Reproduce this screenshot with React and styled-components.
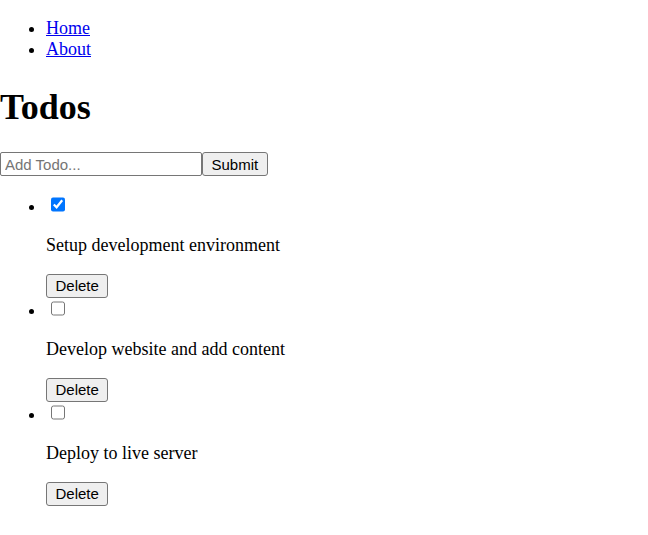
import React, { useState } from "react";
import styled, { createGlobalStyle } from "styled-components";

const Global = createGlobalStyle`
  body {
    margin: 0;
    font-family: "Liberation Serif", "Times New Roman", serif;
    font-size: 18px;
    color: #000;
    background: #fff;
  }
`;

const NavList = styled.ul`
  margin: 18px 0;
  padding-left: 46px;
  list-style: disc;
`;

const NavLink = styled.a`
  color: #0000ee;
  text-decoration: underline;
`;

const Title = styled.h1`
  font-size: 36px;
  font-weight: bold;
  margin: 26px 0 24px;
`;

const Form = styled.form`
  margin: 0;
`;

const TextInput = styled.input`
  box-sizing: border-box;
  width: 202px;
  height: 24px;
  margin: 0;
  padding: 1px 4px;
  border: 1px solid #767676;
  border-radius: 2px;
  font-family: "Liberation Sans", Arial, sans-serif;
  font-size: 15px;
  color: #000;
  vertical-align: baseline;
  &::placeholder {
    color: #757575;
  }
`;

const Button = styled.button`
  box-sizing: border-box;
  height: 24px;
  margin: 0;
  padding: 0 8.5px;
  border: 1px solid #767676;
  border-radius: 3px;
  background: #efefef;
  font-family: "Liberation Sans", Arial, sans-serif;
  font-size: 15px;
  color: #000;
`;

const TodoList = styled.ul`
  margin: 18px 0;
  padding-left: 46px;
  list-style: disc;
`;

const Check = styled.input`
  width: 14.5px;
  height: 14.5px;
  margin: 3.4px 3.4px 3.4px 4.5px;
  accent-color: #0075ff;
`;

const TodoText = styled.p`
  margin: 18px 0;
`;

const initial = [
  { id: 1, text: "Setup development environment", done: true },
  { id: 2, text: "Develop website and add content", done: false },
  { id: 3, text: "Deploy to live server", done: false },
];

export default function App() {
  const [todos, setTodos] = useState(initial);
  const [value, setValue] = useState("");

  const toggle = (id) =>
    setTodos((t) => t.map((x) => (x.id === id ? { ...x, done: !x.done } : x)));
  const remove = (id) => setTodos((t) => t.filter((x) => x.id !== id));
  const submit = (e) => {
    e.preventDefault();
    if (!value.trim()) return;
    setTodos((t) => [...t, { id: Date.now(), text: value, done: false }]);
    setValue("");
  };

  return (
    <>
      <Global />
      <nav>
        <NavList>
          <li>
            <NavLink href="#/">Home</NavLink>
          </li>
          <li>
            <NavLink href="#/about">About</NavLink>
          </li>
        </NavList>
      </nav>
      <Title>Todos</Title>
      <Form onSubmit={submit}>
        <TextInput
          type="text"
          placeholder="Add Todo..."
          value={value}
          onChange={(e) => setValue(e.target.value)}
        />
        <Button type="submit">Submit</Button>
      </Form>
      <TodoList>
        {todos.map((t) => (
          <li key={t.id}>
            <Check type="checkbox" checked={t.done} onChange={() => toggle(t.id)} />
            <TodoText>{t.text}</TodoText>
            <Button type="button" onClick={() => remove(t.id)}>
              Delete
            </Button>
          </li>
        ))}
      </TodoList>
    </>
  );
}
